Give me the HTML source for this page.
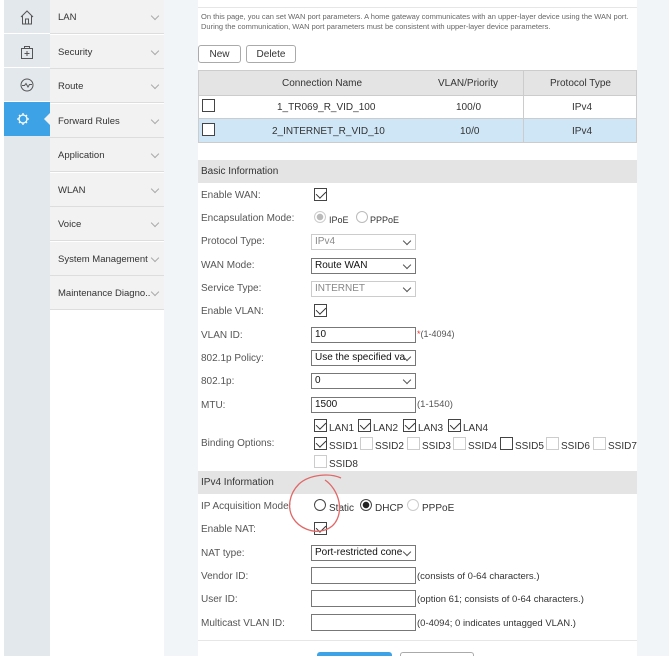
<!DOCTYPE html><html><head><style>
*{margin:0;padding:0;box-sizing:border-box}
html,body{width:669px;height:656px;overflow:hidden}
body{background:#f1f5f8;font-family:"Liberation Sans",sans-serif;font-size:10px;color:#333;position:relative}
.a{position:absolute}
.ib{left:4px;width:46px;height:656px;background:#e3e8ec;top:0}
.ic{left:4px;width:46px;height:34px;border-bottom:1px solid #fff}
.menu{left:50px;top:0;width:114px;height:656px;background:#fff}
.mi{position:absolute;left:0;width:114px;height:34px;background:#f2f2f2;border-bottom:1px solid #ddd;font-size:9.5px;color:#333;padding:12px 0 0 8px}
.mi:after{content:"";position:absolute;right:6px;top:13px;width:5px;height:5px;border-right:1px solid #aaa;border-bottom:1px solid #aaa;transform:rotate(45deg)}
.main{left:198px;top:0;width:439px;height:656px;background:#fff}
.lbl{position:absolute;left:201px;font-size:10px;color:#555}
.inp{position:absolute;left:311px;width:105px;height:16px;border:1px solid #777;background:#fff;font-size:10px;padding:1px 3px;color:#111;overflow:hidden;white-space:nowrap}
.sel:after{content:"";position:absolute;right:5px;top:3px;width:5px;height:5px;border-right:1px solid #555;border-bottom:1px solid #555;transform:rotate(45deg)}
.dis{border-color:#ccc;color:#888}
.cb{position:absolute;width:13px;height:13px;border:1px solid #444;background:#fff}
.ck:after{content:"";position:absolute;left:3px;top:0px;width:5px;height:8px;border-right:1.3px solid #333;border-bottom:1.3px solid #333;transform:rotate(45deg)}
.lc{border-color:#ccc}
.t{position:absolute;font-size:10px;color:#333}
.hd{position:absolute;left:198px;width:439px;height:23px;background:#e4e4e4;font-size:10px;color:#333;padding:6px 0 0 3px}
.rad{position:absolute;width:12px;height:12px;border-radius:50%;border:1px solid #444;background:#fff}
</style></head><body>
<div class="a" style="left:0;top:0;width:4px;height:656px;background:#fff"></div>
<div class="a ib"></div>
<div class="a ic" style="top:0"><svg width="46" height="34"><path d="M17 17 L23 11 L29 17 M18.5 16 V24 H27.5 V16 M21.5 24 V19 H24.5 V24" fill="none" stroke="#555" stroke-width="1"/></svg></div>
<div class="a ic" style="top:34px"><svg width="46" height="34"><rect x="17.5" y="14.5" width="11" height="10" fill="none" stroke="#555"/><path d="M20.5 14.5 V12.5 H25.5 V14.5 M23 17 V22 M20.5 19.5 H25.5" stroke="#555" fill="none"/></svg></div>
<div class="a ic" style="top:68px"><svg width="46" height="34"><circle cx="23" cy="17" r="6" fill="none" stroke="#555"/><path d="M18 17.5 H20.5 L22 15.5 L24 19 L25.5 16.5 H28" fill="none" stroke="#555"/></svg></div>
<div class="a" style="left:4px;top:102px;width:46px;height:34px;background:#3ea3e6"><svg width="46" height="34"><circle cx="19" cy="17" r="4" fill="none" stroke="#fff" stroke-width="1.3"/><path d="M19 11v2M19 21v2M13 17h2M23 17h2M15 13l1.4 1.4M21.6 19.6L23 21M15 21l1.4-1.4M21.6 14.4L23 13" stroke="#fff" stroke-width="1.3"/></svg></div>
<div class="a" style="left:44px;top:112px;width:0;height:0;border-top:7px solid transparent;border-bottom:7px solid transparent;border-right:7px solid #f2f2f2"></div>
<div class="a menu">
<div class="mi" style="top:0">LAN</div>
<div class="mi" style="top:34.5px">Security</div>
<div class="mi" style="top:69px">Route</div>
<div class="mi" style="top:103.5px">Forward Rules</div>
<div class="mi" style="top:138px">Application</div>
<div class="mi" style="top:172.5px">WLAN</div>
<div class="mi" style="top:207px">Voice</div>
<div class="mi" style="top:241.5px">System Management</div>
<div class="mi" style="top:276px">Maintenance Diagno..</div>
</div>
<div class="a main"></div>
<div class="a" style="left:198px;top:7px;width:439px;height:1px;background:#e6e6e6"></div>
<div class="t" style="left:201px;top:12px;font-size:7.5px;color:#666;line-height:10px">On this page, you can set WAN port parameters. A home gateway communicates with an upper-layer device using the WAN port.<br>During the communication, WAN port parameters must be consistent with upper-layer device parameters.</div>
<div class="a" style="left:198px;top:45px;width:43px;height:18px;border:1px solid #aaa;border-radius:3px;font-size:10px;text-align:center;padding-top:3px">New</div>
<div class="a" style="left:246px;top:45px;width:50px;height:18px;border:1px solid #aaa;border-radius:3px;font-size:10px;text-align:center;padding-top:3px">Delete</div>
<div class="a" style="left:198px;top:70px;width:439px;height:73px;border:1px solid #ccc"></div>
<div class="a" style="left:199px;top:71px;width:437px;height:24px;background:#e4e4e4"></div>
<div class="a" style="left:199px;top:119px;width:437px;height:23px;background:#cfe6f6"></div>
<div class="a" style="left:199px;top:95px;width:437px;height:1px;background:#ccc"></div>
<div class="a" style="left:199px;top:118px;width:437px;height:1px;background:#ccc"></div>
<div class="a" style="left:523px;top:71px;width:1px;height:72px;background:#ccc"></div>
<div class="t" style="left:282px;top:78px">Connection Name</div>
<div class="t" style="left:438px;top:78px">VLAN/Priority</div>
<div class="t" style="left:550px;top:78px">Protocol Type</div>
<div class="cb" style="left:202px;top:99px"></div>
<div class="t" style="left:277px;top:102px">1_TR069_R_VID_100</div>
<div class="t" style="left:456px;top:102px">100/0</div>
<div class="t" style="left:572px;top:102px">IPv4</div>
<div class="cb" style="left:202px;top:123px"></div>
<div class="t" style="left:272px;top:126px">2_INTERNET_R_VID_10</div>
<div class="t" style="left:460px;top:126px">10/0</div>
<div class="t" style="left:572px;top:126px">IPv4</div>
<div class="hd" style="top:160px">Basic Information</div>
<div class="lbl" style="top:190px">Enable WAN:</div><div class="cb ck" style="left:314px;top:188px"></div>
<div class="lbl" style="top:213px">Encapsulation Mode:</div>
<div class="rad" style="left:314px;top:211px;border-color:#ccc;background:radial-gradient(#bbb 3px,#fff 3.5px)"></div><div class="t" style="left:329px;top:215px;font-size:9px">IPoE</div>
<div class="rad" style="left:356px;top:211px;border-color:#bbb"></div><div class="t" style="left:370px;top:215px;font-size:9px">PPPoE</div>
<div class="lbl" style="top:236px">Protocol Type:</div><div class="inp sel dis" style="top:234px">IPv4</div>
<div class="lbl" style="top:260px">WAN Mode:</div><div class="inp sel" style="top:258px">Route WAN</div>
<div class="lbl" style="top:283px">Service Type:</div><div class="inp sel dis" style="top:281px">INTERNET</div>
<div class="lbl" style="top:306px">Enable VLAN:</div><div class="cb ck" style="left:314px;top:304px"></div>
<div class="lbl" style="top:330px">VLAN ID:</div><div class="inp" style="top:327px">10</div><div class="t" style="left:417px;top:329px;font-size:9px;color:#555"><span style="color:#e33">*</span>(1-4094)</div>
<div class="lbl" style="top:353px">802.1p Policy:</div><div class="inp sel" style="top:350px;padding-right:14px">Use the specified va</div>
<div class="lbl" style="top:376px">802.1p:</div><div class="inp sel" style="top:373px">0</div>
<div class="lbl" style="top:400px">MTU:</div><div class="inp" style="top:397px">1500</div><div class="t" style="left:417px;top:399px;font-size:9.5px;color:#555">(1-1540)</div>
<div class="lbl" style="top:438px">Binding Options:</div>
<div class="cb ck" style="left:314px;top:419px"></div><div class="t" style="left:329px;top:423px">LAN1</div>
<div class="cb ck" style="left:358px;top:419px"></div><div class="t" style="left:373px;top:423px">LAN2</div>
<div class="cb ck" style="left:403px;top:419px"></div><div class="t" style="left:418px;top:423px">LAN3</div>
<div class="cb ck" style="left:448px;top:419px"></div><div class="t" style="left:463px;top:423px">LAN4</div>
<div class="cb ck" style="left:314px;top:437px"></div><div class="t" style="left:329px;top:441px">SSID1</div>
<div class="cb lc" style="left:360px;top:437px"></div><div class="t" style="left:375px;top:441px">SSID2</div>
<div class="cb lc" style="left:407px;top:437px"></div><div class="t" style="left:422px;top:441px">SSID3</div>
<div class="cb lc" style="left:453px;top:437px"></div><div class="t" style="left:468px;top:441px">SSID4</div>
<div class="cb" style="left:500px;top:437px"></div><div class="t" style="left:515px;top:441px">SSID5</div>
<div class="cb lc" style="left:546px;top:437px"></div><div class="t" style="left:561px;top:441px">SSID6</div>
<div class="cb lc" style="left:593px;top:437px"></div><div class="t" style="left:608px;top:441px">SSID7</div>
<div class="cb lc" style="left:314px;top:455px"></div><div class="t" style="left:329px;top:459px">SSID8</div>
<div class="hd" style="top:471px">IPv4 Information</div>
<div class="lbl" style="top:501px">IP Acquisition Mode:</div>
<div class="rad" style="left:314px;top:499px"></div><div class="t" style="left:329px;top:503px">Static</div>
<div class="rad" style="left:360px;top:499px;background:radial-gradient(#222 3px,#fff 3.5px)"></div><div class="t" style="left:375px;top:503px">DHCP</div>
<div class="rad" style="left:407px;top:499px;border-color:#ccc"></div><div class="t" style="left:422px;top:503px">PPPoE</div>
<div class="lbl" style="top:524px">Enable NAT:</div><div class="cb ck" style="left:314px;top:522px"></div>
<svg class="a" style="left:285px;top:470px" width="70" height="70"><path d="M56 8 C45 3 25 4 14 14 C4 24 2 38 8 48 C14 58 28 64 40 60 C52 56 56 44 54 32 C52 22 46 14 40 10" fill="none" stroke="#e06868" stroke-width="1.3"/></svg>
<div class="lbl" style="top:548px">NAT type:</div><div class="inp sel" style="top:545px;padding-right:14px">Port-restricted cone</div>
<div class="lbl" style="top:571px">Vendor ID:</div><div class="inp" style="top:567px;height:17px"></div><div class="t" style="left:417px;top:571px;font-size:9.5px">(consists of 0-64 characters.)</div>
<div class="lbl" style="top:594px">User ID:</div><div class="inp" style="top:590px;height:17px"></div><div class="t" style="left:417px;top:594px;font-size:9.5px">(option 61; consists of 0-64 characters.)</div>
<div class="lbl" style="top:618px">Multicast VLAN ID:</div><div class="inp" style="top:614px;height:17px"></div><div class="t" style="left:417px;top:618px;font-size:9.5px">(0-4094; 0 indicates untagged VLAN.)</div>
<div class="a" style="left:198px;top:640px;width:439px;height:1px;background:#e6e6e6"></div>
<div class="a" style="left:317px;top:652px;width:75px;height:4px;background:#3ea3e6;border-radius:3px 3px 0 0"></div>
<div class="a" style="left:400px;top:652px;width:74px;height:4px;border:1px solid #aaa;border-bottom:none;border-radius:3px 3px 0 0"></div>
</body></html>
